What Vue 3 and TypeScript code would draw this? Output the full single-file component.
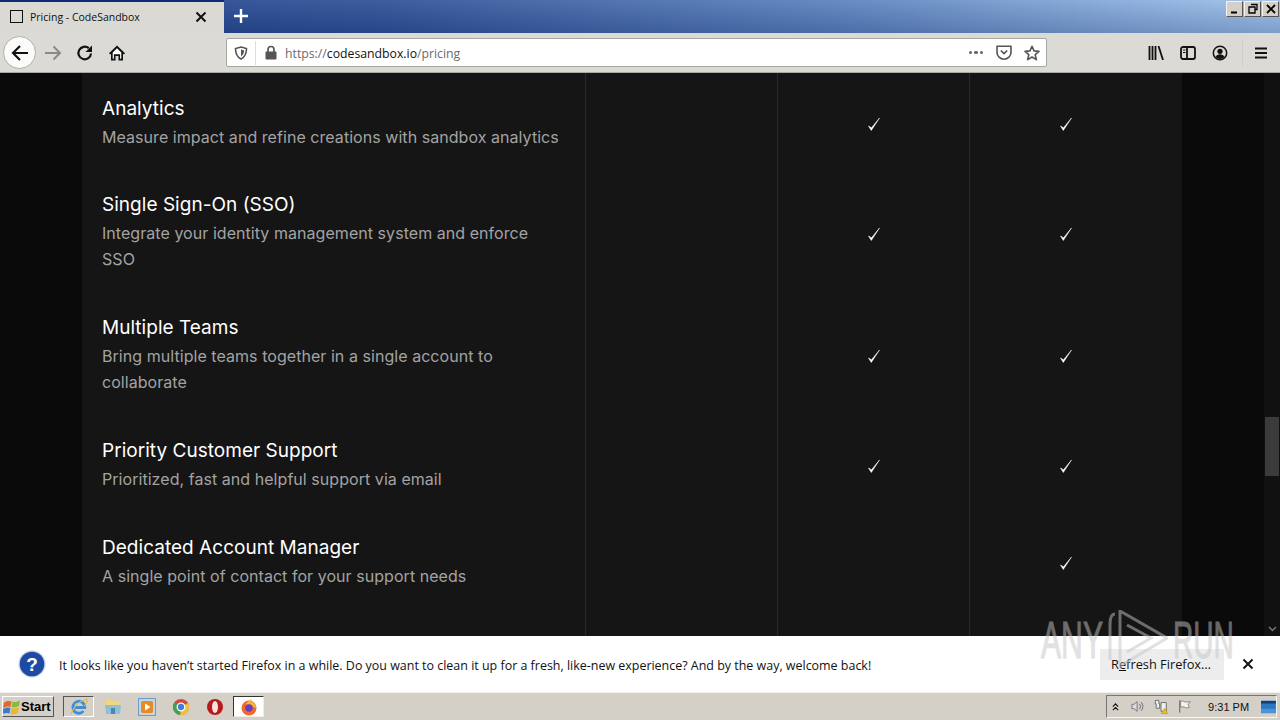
<script setup lang="ts">
interface Feature {
  title: string
  lines: string
  plan3: boolean
  plan4: boolean
}
const features: Feature[] = [
  { title: 'Analytics', lines: 'Measure impact and refine creations with sandbox analytics', plan3: true, plan4: true },
  { title: 'Single Sign-On (SSO)', lines: 'Integrate your identity management system and enforce SSO', plan3: true, plan4: true },
  { title: 'Multiple Teams', lines: 'Bring multiple teams together in a single account to collaborate', plan3: true, plan4: true },
  { title: 'Priority Customer Support', lines: 'Prioritized, fast and helpful support via email', plan3: true, plan4: true },
  { title: 'Dedicated Account Manager', lines: 'A single point of contact for your support needs', plan3: false, plan4: true }
]
</script>

<template>
  <div class="screen">
    <header class="titlebar">
      <div class="tab">
        <span class="favicon"></span>
        <span class="tab-title">Pricing - CodeSandbox</span>
        <svg class="tab-close" width="12" height="12" viewBox="0 0 12 12"><path d="M1.500 1.500l9 9M10.500 1.500l-9 9" stroke="#111" stroke-width="2" fill="none"/></svg>
      </div>
      <svg class="newtab" width="16" height="16" viewBox="0 0 16 16"><path d="M8 1v14M1 8h14" stroke="#fff" stroke-width="2.4" fill="none"/></svg>
      <div class="winbtns">
        <span class="winbtn"><svg width="14" height="12" viewBox="0 0 14 12"><path d="M3 9.500h6" stroke="#000" stroke-width="2"/></svg></span>
        <span class="winbtn"><svg width="14" height="12" viewBox="0 0 14 12"><path d="M5 1.500h6v5h-2M3 4h6v6H3z" stroke="#000" stroke-width="1.3" fill="none"/></svg></span>
        <span class="winbtn"><svg width="14" height="12" viewBox="0 0 14 12"><path d="M3 2l8 8M11 2l-8 8" stroke="#000" stroke-width="1.8" fill="none"/></svg></span>
      </div>
    </header>

    <nav class="toolbar">
      <span class="backbtn">
        <svg width="20" height="20" viewBox="0 0 20 20"><path d="M18 10H3M10 3l-7 7 7 7" stroke="#111" stroke-width="2.2" fill="none"/></svg>
      </span>
      <svg class="tool forward" width="18" height="18" viewBox="0 0 18 18"><path d="M1 9h15M9.500 2.500L16 9l-6.500 6.500" stroke="#8a8a86" stroke-width="2" fill="none"/></svg>
      <svg class="tool reload" width="18" height="18" viewBox="0 0 18 18"><path d="M15 9.500A6.300 6.300 0 1 1 12.800 4.200" stroke="#111" stroke-width="2.2" fill="none"/><path d="M16 1.500V8H9.500z" fill="#111"/></svg>
      <svg class="tool home" width="18" height="18" viewBox="0 0 18 18"><path d="M9 1.500L1 9.200l1.200 1.200L3 9.700V16.500h4.500v-4.500h3v4.500H15V9.700l.8.7L17 9.200z" fill="#111"/><path d="M9 4.200l4.300 4.200v6.400h-1.200v-4.500H5.900v4.500H4.700V8.400z" fill="#fff"/></svg>

      <div class="urlbar">
        <svg class="shield" width="14" height="14" viewBox="0 0 14 14"><path d="M7 1l5.500 1.500c0 5-1.500 8.500-5.500 10.500C3 11 1.500 7.500 1.500 2.500z" fill="none" stroke="#555" stroke-width="1.6"/><path d="M7 3.500v7c2-1.300 3-3.500 3.200-6z" fill="#555"/></svg>
        <span class="urlsep"></span>
        <svg class="lock" width="14" height="15" viewBox="0 0 14 15"><path d="M4 7V4.500a3 3 0 0 1 6 0V7" fill="none" stroke="#555" stroke-width="1.7"/><rect x="1.500" y="6.500" width="11" height="8" rx="1" fill="#555"/></svg>
        <span class="url"><span class="dim">https://</span>codesandbox.io<span class="dim">/pricing</span></span>
        <span class="dots"><i></i><i></i><i></i></span>
        <svg class="pocket" width="16" height="15" viewBox="0 0 16 15"><path d="M1 1.200h14v6a7 7 0 0 1-14 0z" fill="none" stroke="#555" stroke-width="1.6" stroke-linejoin="round"/><path d="M4.800 5.500L8 8.500l3.200-3" fill="none" stroke="#555" stroke-width="1.7"/></svg>
        <svg class="star" width="16" height="16" viewBox="0 0 16 16"><path d="M8 1.300l2 4.600 5 .5-3.800 3.300 1.200 4.900L8 12l-4.400 2.600 1.200-4.900L1 6.400l5-.5z" fill="none" stroke="#555" stroke-width="1.6" stroke-linejoin="round"/></svg>
      </div>

      <div class="rightools">
        <svg width="16" height="14" viewBox="0 0 16 14"><path d="M1.500 0v14M4.500 0v14M7.500 0v14" stroke="#111" stroke-width="1.8"/><path d="M10.500 0l4.500 14" stroke="#111" stroke-width="1.8"/></svg>
        <svg width="16" height="14" viewBox="0 0 16 14"><rect x="1" y="1" width="14" height="12" rx="2" fill="none" stroke="#111" stroke-width="1.8"/><path d="M7 1v12" stroke="#111" stroke-width="1.8"/><path d="M3 4h2.500M3 6.500h2.500" stroke="#111" stroke-width="1"/></svg>
        <svg width="16" height="16" viewBox="0 0 16 16"><circle cx="8" cy="8" r="6.700" fill="none" stroke="#111" stroke-width="1.5"/><circle cx="8" cy="6.300" r="2.600" fill="#111"/><path d="M3.500 12c1-2 2.500-2.800 4.500-2.800s3.500.8 4.500 2.800A6 6 0 0 1 3.500 12z" fill="#111"/></svg>
        <span class="toolsep"></span>
        <svg width="14" height="12" viewBox="0 0 14 12"><path d="M1 1.500h12M1 6h12M1 10.500h12" stroke="#111" stroke-width="1.8"/></svg>
      </div>
    </nav>

    <main class="viewport">
      <div class="gutter"></div>
      <section class="panel">
        <div class="row spacer"><i></i><i></i><i></i><i></i></div>
        <article v-for="f in features" :key="f.title" class="row">
          <div class="feature">
            <h3>{{ f.title }}</h3>
            <p>{{ f.lines }}</p>
          </div>
          <div class="cell"></div>
          <div class="cell">
            <svg v-if="f.plan3" width="14" height="16" viewBox="0 0 14 16"><path d="M1.500 10L4.300 14.500 12.500 2 4.500 11.800z" fill="#fff" stroke="#fff" stroke-width=".5"/></svg>
          </div>
          <div class="cell last">
            <svg v-if="f.plan4" width="14" height="16" viewBox="0 0 14 16"><path d="M1.500 10L4.300 14.500 12.500 2 4.500 11.800z" fill="#fff" stroke="#fff" stroke-width=".5"/></svg>
          </div>
        </article>
        <div class="row filler"><i></i><i></i><i></i><i></i></div>
      </section>
      <div class="gutter"></div>
      <aside class="scrollbar">
        <span class="thumb"></span>
        <svg class="arrow" width="9" height="6" viewBox="0 0 9 6"><path d="M1 1l3.500 3.500L8 1" stroke="#777" stroke-width="1.5" fill="none"/></svg>
      </aside>
    </main>

    <section class="notice">
      <svg class="qmark" width="28" height="28" viewBox="0 0 28 28">
        <circle cx="14" cy="14" r="13.500" fill="#c4d2ea"/>
        <circle cx="14" cy="14" r="12.300" fill="#1f4aa3"/>
        <text x="14" y="20.500" text-anchor="middle" class="qtext">?</text>
      </svg>
      <p class="notice-text">It looks like you haven’t started Firefox in a while. Do you want to clean it up for a fresh, like-new experience? And by the way, welcome back!</p>
      <button class="refresh">R<u>e</u>fresh Firefox…</button>
      <svg class="notice-x" width="12" height="12" viewBox="0 0 12 12"><path d="M1.500 1.500l9 9M10.500 1.500l-9 9" stroke="#111" stroke-width="1.9" fill="none"/></svg>
    </section>

    <footer class="taskbar">
      <button class="start">
        <svg width="18" height="16" viewBox="0 0 18 16"><path d="M1 3.500C3 2 6 1.500 8.500 2.500L7.500 8C5 7 3 7.500 0 9z" fill="#e0682c"/><path d="M9.500 2.500C12 3.500 14.500 3 17 1.500L16 7c-2.500 1.500-5 2-7.500 1z" fill="#8ab93f"/><path d="M0 10c3-1.500 5-2 7.500-1L6.500 14.500C4 13.500 2 14 -.5 15z" fill="#3a7cc9"/><path d="M8.500 9c2.500 1 5 .5 7.500-1l-1 6c-2.500 1.500-5 2-7.500 1z" fill="#e7b92e"/></svg>
        <span>Start</span>
      </button>
      <span class="tb-item pressed">
        <svg width="20" height="20" viewBox="0 0 20 20"><path d="M4.200 10.500h11.600A6 6 0 1 0 14.500 14" fill="none" stroke="#3f8fd8" stroke-width="2.800"/><path d="M2 17c3-8 9-13 15.500-15 1.500 2-.5 5-2 7" fill="none" stroke="#e5b93c" stroke-width="1.300"/></svg>
      </span>
      <span class="tb-item">
        <svg width="18" height="17" viewBox="0 0 18 17"><path d="M2 2h6l2 2h6v5H2z" fill="#f0d878"/><path d="M1 7h16l-1 9H2z" fill="#8fc0da"/><rect x="7" y="10" width="4" height="6" fill="#4f86ad"/></svg>
      </span>
      <span class="tb-item">
        <svg width="18" height="18" viewBox="0 0 18 18"><rect x=".5" y=".5" width="17" height="17" fill="#bcd6ec" stroke="#6f9cc6"/><rect x="3" y="3" width="12" height="12" rx="2" fill="#e98a1e"/><path d="M7 5.500v7l5.500-3.500z" fill="#fff"/></svg>
      </span>
      <span class="tb-item">
        <svg width="18" height="18" viewBox="0 0 18 18"><circle cx="9" cy="9" r="8" fill="#d9463c"/><path d="M9 9l7-4a8 8 0 0 1-8 12z" fill="#eec33c"/><path d="M9 9l-1 8A8 8 0 0 1 2.300 4.500z" fill="#3fa34f"/><circle cx="9" cy="9" r="3.800" fill="#3f7fd6" stroke="#fff" stroke-width="1.3"/></svg>
      </span>
      <span class="tb-item">
        <svg width="18" height="18" viewBox="0 0 18 18"><circle cx="9" cy="9" r="8" fill="#b81a1a"/><ellipse cx="9" cy="9" rx="3" ry="6" fill="#f4e4e4"/></svg>
      </span>
      <span class="tb-item active">
        <svg width="18" height="18" viewBox="0 0 18 18"><circle cx="9" cy="10" r="7.500" fill="#f0692a"/><path d="M3 5c1 1 2 1 3 1 1-2 3-4 6-5-1 1-1 2 0 3 3 1 4 4 4 6" fill="#f7b733"/><circle cx="9" cy="10" r="3.800" fill="#6a3fc1"/></svg>
      </span>
      <div class="tray">
        <svg width="8" height="10" viewBox="0 0 8 10"><path d="M1 4.500L4 1.500l3 3M1 8.500l3-3 3 3" stroke="#111" stroke-width="1.3" fill="none"/></svg>
        <svg class="t-speaker" width="16" height="15" viewBox="0 0 16 15"><path d="M1 5h2.500L7 2v11L3.500 10H1z" fill="#d8dce0" stroke="#666" stroke-width=".9"/><path d="M9.500 4.500a4 4 0 0 1 0 6M11.500 2.500a7 7 0 0 1 0 10" stroke="#666" fill="none"/></svg>
        <svg width="16" height="17" viewBox="0 0 16 17"><path d="M1.500 1.500h4v4h1v5h-4v-5h-1zM8 4h6v10H8z" fill="#eef0f2" stroke="#555" stroke-width=".9"/><path d="M8.500 16.500l3.500-6 3.500 6z" fill="#f0c419" stroke="#96760c" stroke-width=".5"/></svg>
        <svg class="t-flag" width="16" height="15" viewBox="0 0 16 15"><path d="M2 .5v14" stroke="#666" stroke-width="1.2"/><path d="M3 1.500c3-1 4 1 6 1l5-.5-2.500 3.500 1.500 3c-3 1-5 .5-6-.5H3z" fill="#f2f2f0" stroke="#666" stroke-width=".8"/></svg>
        <span class="clock">9:31 PM</span>
        <svg class="showdesk" width="17" height="14" viewBox="0 0 17 14"><rect width="17" height="14" fill="#2c76c2"/><rect y="9" width="17" height="5" fill="#4c94d8"/><path d="M0 0h17v3H0z" fill="#0d3f80"/></svg>
      </div>
    </footer>

    <div class="watermark" aria-hidden="true">
      <span class="wm-text any">ANY</span>
      <svg width="61" height="60" viewBox="0 0 61 60"><path d="M8 4C4 4 3 8 3 14V50" fill="none" stroke="#c4c4c4" stroke-width="3"/><path d="M13 1L60 28 13 56zM20 15L44 28 20 42" fill="none" stroke="#c4c4c4" stroke-width="3"/></svg>
      <span class="wm-text run">RUN</span>
    </div>
  </div>
</template>

<style scoped>
.screen {
  width: 1280px;
  height: 720px;
  display: flex;
  flex-direction: column;
  overflow: hidden;
  position: relative;
  font-family: "Open Sans", "Liberation Sans", sans-serif;
}

/* window title + tab strip */
.titlebar {
  height: 33px;
  display: flex;
  align-items: stretch;
  background:
    linear-gradient(180deg, rgba(255, 255, 255, .07), rgba(10, 30, 90, .22)),
    linear-gradient(90deg, #20408a 0%, #2f5196 30%, #5b82bd 65%, #9fc2ea 100%);
}
.tab {
  width: 224px;
  display: flex;
  align-items: center;
  background: #dbd9d4;
  border-top: 2px solid #0e2a78;
  padding: 0 17px 2px 10px;
  box-sizing: border-box;
}
.favicon {
  width: 11px;
  height: 11px;
  border: 1px solid #111;
  background: #dbd9d4;
  margin-right: 7px;
}
.tab-title {
  flex: 1;
  font-size: 10.5px;
  color: #111;
}
.newtab {
  margin: 8px 0 0 9px;
}
.winbtns {
  margin-left: auto;
  display: flex;
  gap: 1px;
  padding: 1px 1px 0 0;
}
.winbtn {
  width: 15px;
  height: 14px;
  background: #d4d0c8;
  border: 1px solid;
  border-color: #f4f2ee #555 #555 #f4f2ee;
  display: flex;
  align-items: center;
  justify-content: center;
}

/* navigation toolbar */
.toolbar {
  height: 40px;
  background: #dcdad5;
  border-bottom: 1px solid #a9a8a4;
  box-sizing: border-box;
  display: flex;
  align-items: center;
  padding-left: 3px;
}
.backbtn {
  width: 33px;
  height: 33px;
  border-radius: 50%;
  background: #fbfbfa;
  border: 1px solid #b0aeaa;
  box-sizing: border-box;
  display: flex;
  align-items: center;
  justify-content: center;
}
.tool { flex: none; }
.forward { margin-left: 8px; }
.reload { margin-left: 14px; }
.home { margin-left: 14px; }
.urlbar {
  margin-left: 100px;
  width: 821px;
  height: 29px;
  background: #fff;
  border: 1px solid #a6a6a3;
  border-radius: 2px;
  box-sizing: border-box;
  display: flex;
  align-items: center;
  padding: 0 6px 0 7px;
}
.shield { flex: none; }
.urlsep {
  width: 1px;
  height: 24px;
  background: #dddddb;
  margin: 0 8px 0 7px;
}
.lock { flex: none; margin-right: 7px; }
.url {
  font-size: 12.25px;
  color: #111;
  flex: 1;
  padding-top: 2px;
}
.dim { color: #6b6b6b; }
.dots {
  display: flex;
  gap: 2px;
  margin-right: 13px;
}
.dots i {
  width: 3.5px;
  height: 3.5px;
  border-radius: 50%;
  background: #666;
}
.pocket { margin-right: 12px; }
.rightools {
  margin-left: 101px;
  display: flex;
  align-items: center;
  gap: 16px;
}
.toolsep {
  width: 1px;
  height: 26px;
  background: #cfcdc8;
  margin: 0 -5px 0 -2px;
}

/* page */
.viewport {
  height: 563px;
  flex: none;
  display: flex;
  background: #0a0a0a;
}
.gutter {
  width: 82px;
  background: #0a0a0a;
}
.panel {
  width: 1100px;
  background: #151515;
  display: flex;
  flex-direction: column;
  color: #fff;
  font-family: Inter, "Liberation Sans", sans-serif;
}
.row {
  display: grid;
  grid-template-columns: 504px 192px 192px 192px;
  flex: none;
}
.spacer { height: 2.5px; }
.filler { flex: 1; }
.row > i,
.feature,
.cell {
  border-right: 1px solid #2a2a2a;
  display: block;
}
.row > i:last-child,
.cell.last {
  border-right: 0;
}
.feature {
  padding: 20px 20px 22.4px;
}
.feature h3 {
  margin: 0 0 3px;
  font-size: 19px;
  line-height: 26px;
  font-weight: 400;
  letter-spacing: .03px;
}
.feature p {
  margin: 0;
  font-size: 16px;
  line-height: 25.6px;
  color: #a3a3a3;
  letter-spacing: .05px;
}
.cell {
  display: flex;
  align-items: center;
  justify-content: center;
}

.scrollbar {
  width: 16px;
  background: #111;
  position: relative;
}
.thumb {
  position: absolute;
  left: 1px;
  right: 1px;
  top: 344px;
  height: 59px;
  background: #3b3b3b;
}
.arrow {
  position: absolute;
  left: 4px;
  bottom: 4px;
}

/* notification bar */
.notice {
  height: 56px;
  flex: none;
  background: #fff;
  display: flex;
  align-items: center;
  box-sizing: border-box;
  padding: 0 26px 0 18px;
}
.qtext {
  font: 700 19px "Liberation Sans", sans-serif;
  fill: #fff;
}
.notice-text {
  margin: 2px 0 0 13px;
  flex: 1;
  font-size: 12.46px;
  color: #111;
}
.refresh {
  width: 124px;
  height: 31px;
  border: 0;
  padding: 0 2px 0 0;
  background: #ededed;
  font: 400 12.8px "Open Sans", sans-serif;
  color: #111;
  margin-right: 18px;
}

/* taskbar */
.taskbar {
  height: 28px;
  flex: none;
  background: #d4d0c8;
  border-top: 1px solid #f2f0ec;
  box-sizing: border-box;
  display: flex;
  align-items: center;
  padding-left: 2px;
}
.start {
  width: 52px;
  height: 21px;
  background: #d4d0c8;
  border: 1px solid;
  border-color: #fff #555 #555 #fff;
  padding: 0;
  margin-right: 9px;
  display: flex;
  align-items: center;
  font: 700 13px "Liberation Sans", sans-serif;
  color: #000;
}
.tb-item {
  width: 31px;
  height: 21px;
  margin-right: 3px;
  box-sizing: border-box;
  display: flex;
  align-items: center;
  justify-content: center;
}
.tb-item.pressed {
  border: 1px solid;
  border-color: #555 #fff #fff #555;
}
.tb-item.active {
  background: #fff;
  border: 1px solid;
  border-color: #333 #eee #eee #333;
}
.tray {
  margin-left: auto;
  margin-right: 3px;
  width: 171px;
  height: 23px;
  border: 1px solid;
  border-color: #777 #f6f6f6 #f6f6f6 #777;
  box-sizing: border-box;
  display: flex;
  align-items: center;
  padding-left: 5px;
  gap: 9px;
}
.t-speaker { margin-left: 3px; }
.t-flag { margin-left: 1px; }
.clock {
  font: 400 11px "Liberation Sans", sans-serif;
  color: #111;
  margin-left: 7px;
  margin-right: 3px;
  white-space: nowrap;
}

/* watermark over everything */
.watermark {
  position: absolute;
  left: 1041px;
  top: 610px;
  height: 60px;
  display: flex;
  align-items: center;
  opacity: .5;
  color: #c4c4c4;
  font: 400 52px "Liberation Sans", sans-serif;
  pointer-events: none;
  -webkit-text-stroke: 1px #c4c4c4;
}
.wm-text {
  display: inline-block;
  transform-origin: left center;
  white-space: nowrap;
}
.any {
  width: 66px;
  transform: scaleX(.58);
}
.run {
  width: 58px;
  margin-left: 5px;
  transform: scaleX(.54);
}
</style>
